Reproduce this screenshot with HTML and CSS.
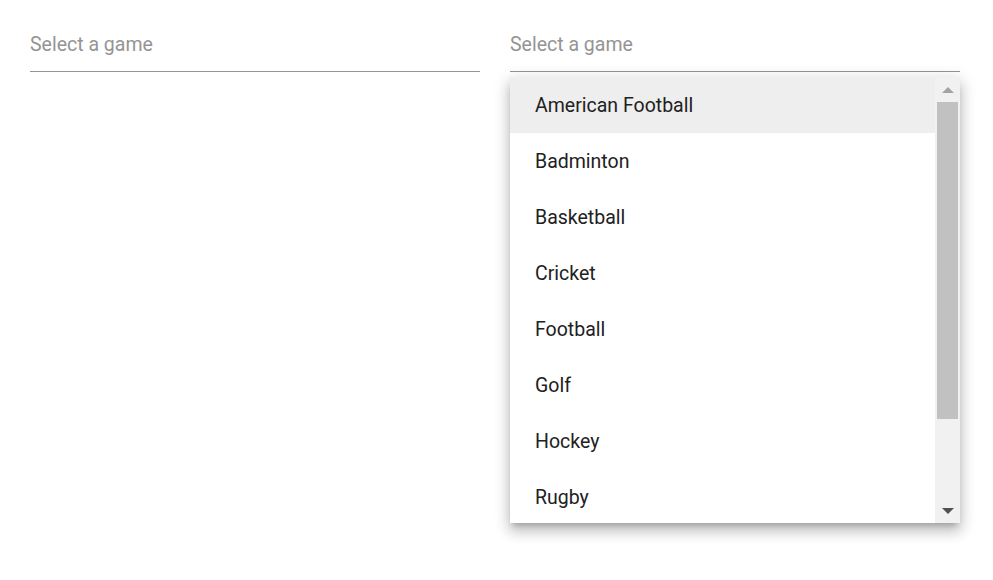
FILE: index.html
```html
<!DOCTYPE html>
<html>
<head>
<meta charset="utf-8">
<link rel="stylesheet" href="styles.css">
</head>
<body>
<div class="row">
  <div class="field">
    <div class="input"><span class="placeholder">Select a game</span></div>
  </div>
  <div class="field">
    <div class="input"><span class="placeholder">Select a game</span></div>
    <div class="popup">
      <div class="list">
        <div class="item active">American Football</div>
        <div class="item">Badminton</div>
        <div class="item">Basketball</div>
        <div class="item">Cricket</div>
        <div class="item">Football</div>
        <div class="item">Golf</div>
        <div class="item">Hockey</div>
        <div class="item">Rugby</div>
      </div>
      <div class="scrollbar">
        <div class="sb-btn"><span class="arrow-up"></span></div>
        <div class="sb-track">
          <div class="sb-thumb"></div>
        </div>
        <div class="sb-btn"><span class="arrow-down"></span></div>
      </div>
    </div>
  </div>
</div>
</body>
</html>
```
FILE: styles.css
```css
html, body {
  margin: 0;
  padding: 0;
  background: #ffffff;
  font-family: Roboto, "Liberation Sans", sans-serif;
}
body {
  min-height: 580px;
}
.row {
  display: flex;
  align-items: flex-start;
  gap: 30px;
  padding: 0 30px 40px;
}
.field {
  width: 450px;
  display: flex;
  flex-direction: column;
}
.input {
  box-sizing: border-box;
  height: 72px;
  border-bottom: 1px solid #949494;
  padding-top: 31px;
}
.placeholder {
  font-size: 19.5px;
  line-height: 27px;
  color: #949494;
  display: block;
}
.popup {
  margin-top: 5px;
  width: 450px;
  height: 446px;
  background: #ffffff;
  display: flex;
  box-shadow: 0 5px 6px -3px rgba(0,0,0,0.22), 0 9px 12px 1px rgba(0,0,0,0.15), 0 3px 16px 2px rgba(0,0,0,0.12);
}
.list {
  flex: 1;
  height: 446px;
  overflow: hidden;
}
.item {
  height: 56px;
  display: flex;
  align-items: center;
  padding-left: 25px;
  font-size: 19.5px;
  color: #212121;
}
.item.active {
  background: #eeeeee;
}
.scrollbar {
  width: 25px;
  background: #f1f1f1;
  display: flex;
  flex-direction: column;
}
.sb-btn {
  height: 25px;
  display: flex;
  align-items: center;
  justify-content: center;
  flex: none;
}
.arrow-up {
  width: 0;
  height: 0;
  border-left: 6px solid transparent;
  border-right: 6px solid transparent;
  border-bottom: 6px solid #a3a3a3;
}
.arrow-down {
  width: 0;
  height: 0;
  border-left: 6px solid transparent;
  border-right: 6px solid transparent;
  border-top: 6px solid #505050;
}
.sb-track {
  flex: 1;
  padding: 0 2px;
}
.sb-thumb {
  height: 317px;
  background: #c1c1c1;
}
```
